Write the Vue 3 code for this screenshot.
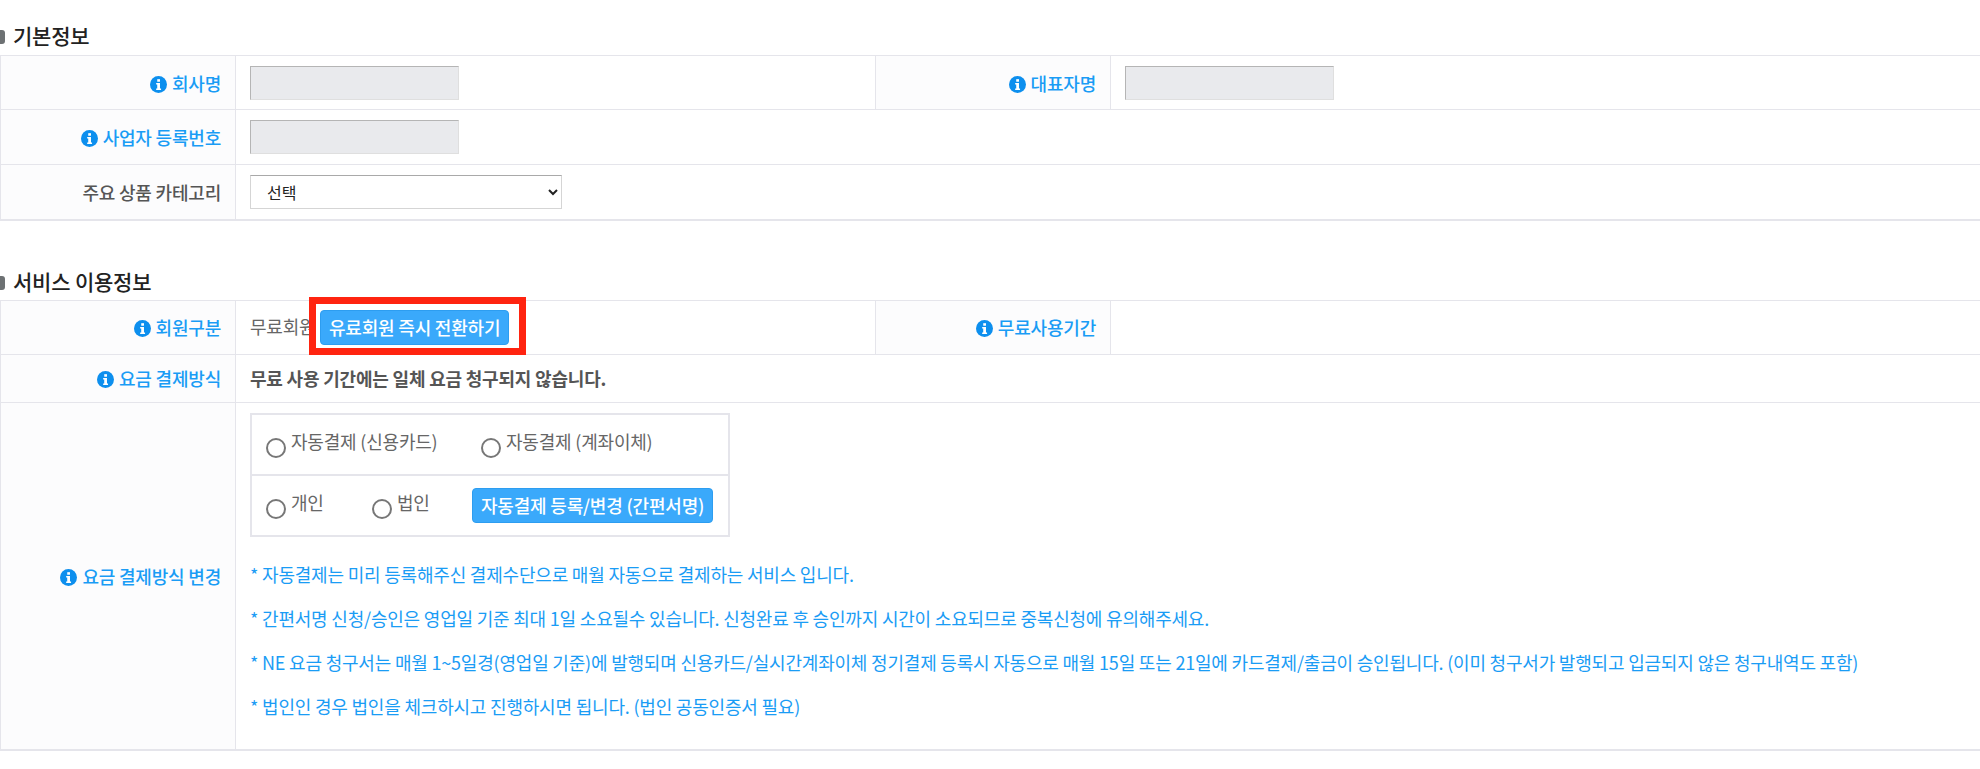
<script setup>
const notes = [
  '* 자동결제는 미리 등록해주신 결제수단으로 매월 자동으로 결제하는 서비스 입니다.',
  '* 간편서명 신청/승인은 영업일 기준 최대 1일 소요될수 있습니다. 신청완료 후 승인까지 시간이 소요되므로 중복신청에 유의해주세요.',
  '* NE 요금 청구서는 매월 1~5일경(영업일 기준)에 발행되며 신용카드/실시간계좌이체 정기결제 등록시 자동으로 매월 15일 또는 21일에 카드결제/출금이 승인됩니다. (이미 청구서가 발행되고 입금되지 않은 청구내역도 포함)',
  '* 법인인 경우 법인을 체크하시고 진행하시면 됩니다. (법인 공동인증서 필요)'
]
</script>

<template>
  <div class="page">
    <h2 class="title title-first"><span class="bullet"></span>기본정보</h2>
    <table class="grid grid-basic">
      <colgroup><col class="c1" /><col class="c2" /><col class="c3" /><col /></colgroup>
      <tbody>
        <tr class="r54">
          <th class="info"><svg class="ic" viewBox="0 0 16 16"><circle cx="8" cy="8" r="8" fill="#0d8fee"/><rect x="6.8" y="3" width="2.6" height="2.4" fill="#fff"/><path d="M5.8 6.6h3.6v5.2h1v1.4H5.8v-1.4h1V8H5.8z" fill="#fff"/></svg>회사명</th>
          <td><input class="field" disabled /></td>
          <th class="info"><svg class="ic" viewBox="0 0 16 16"><circle cx="8" cy="8" r="8" fill="#0d8fee"/><rect x="6.8" y="3" width="2.6" height="2.4" fill="#fff"/><path d="M5.8 6.6h3.6v5.2h1v1.4H5.8v-1.4h1V8H5.8z" fill="#fff"/></svg>대표자명</th>
          <td><input class="field" disabled /></td>
        </tr>
        <tr class="r55">
          <th class="info"><svg class="ic" viewBox="0 0 16 16"><circle cx="8" cy="8" r="8" fill="#0d8fee"/><rect x="6.8" y="3" width="2.6" height="2.4" fill="#fff"/><path d="M5.8 6.6h3.6v5.2h1v1.4H5.8v-1.4h1V8H5.8z" fill="#fff"/></svg>사업자 등록번호</th>
          <td colspan="3"><input class="field" disabled /></td>
        </tr>
        <tr class="r55">
          <th>주요 상품 카테고리</th>
          <td colspan="3"><select class="pick"><option>선택</option></select></td>
        </tr>
      </tbody>
    </table>

    <h2 class="title title-second"><span class="bullet"></span>서비스 이용정보</h2>
    <table class="grid">
      <colgroup><col class="c1" /><col class="c2" /><col class="c3" /><col /></colgroup>
      <tbody>
        <tr class="r54">
          <th class="info"><svg class="ic" viewBox="0 0 16 16"><circle cx="8" cy="8" r="8" fill="#0d8fee"/><rect x="6.8" y="3" width="2.6" height="2.4" fill="#fff"/><path d="M5.8 6.6h3.6v5.2h1v1.4H5.8v-1.4h1V8H5.8z" fill="#fff"/></svg>회원구분</th>
          <td>
            <div class="member"><span class="free">무료회원</span><span class="callout"><button class="btn">유료회원 즉시 전환하기</button></span></div>
          </td>
          <th class="info"><svg class="ic" viewBox="0 0 16 16"><circle cx="8" cy="8" r="8" fill="#0d8fee"/><rect x="6.8" y="3" width="2.6" height="2.4" fill="#fff"/><path d="M5.8 6.6h3.6v5.2h1v1.4H5.8v-1.4h1V8H5.8z" fill="#fff"/></svg>무료사용기간</th>
          <td></td>
        </tr>
        <tr class="r48">
          <th class="info"><svg class="ic" viewBox="0 0 16 16"><circle cx="8" cy="8" r="8" fill="#0d8fee"/><rect x="6.8" y="3" width="2.6" height="2.4" fill="#fff"/><path d="M5.8 6.6h3.6v5.2h1v1.4H5.8v-1.4h1V8H5.8z" fill="#fff"/></svg>요금 결제방식</th>
          <td colspan="3" class="strong">무료 사용 기간에는 일체 요금 청구되지 않습니다.</td>
        </tr>
        <tr>
          <th class="info"><svg class="ic" viewBox="0 0 16 16"><circle cx="8" cy="8" r="8" fill="#0d8fee"/><rect x="6.8" y="3" width="2.6" height="2.4" fill="#fff"/><path d="M5.8 6.6h3.6v5.2h1v1.4H5.8v-1.4h1V8H5.8z" fill="#fff"/></svg>요금 결제방식 변경</th>
          <td colspan="3" class="pay">
            <div class="box">
              <div class="box-row">
                <label class="radio w217"><i class="dot"></i>자동결제 (신용카드)</label>
                <label class="radio"><i class="dot"></i>자동결제 (계좌이체)</label>
              </div>
              <div class="box-row">
                <label class="radio w106"><i class="dot"></i>개인</label>
                <label class="radio w100"><i class="dot"></i>법인</label>
                <button class="btn btn-wide">자동결제 등록/변경 (간편서명)</button>
              </div>
            </div>
            <ul class="notes">
              <li v-for="n in notes" :key="n">{{ n }}</li>
            </ul>
          </td>
        </tr>
      </tbody>
    </table>
  </div>
</template>

<style>
html, body { margin: 0; background: #fff; }
</style>

<style scoped>
.page {
  width: 1980px;
  height: 769px;
  overflow: hidden;
  font-family: "Noto Sans CJK KR", "Noto Sans", sans-serif;
  color: #4a4a4a;
  font-size: 18px;
  letter-spacing: -0.2px;
}
.title {
  margin: 0;
  display: flex;
  align-items: center;
  font-size: 21px;
  font-weight: 500;
  color: #222;
  height: 24px;
}
.title-first { padding-top: 23px; padding-bottom: 8px; }
.title-second { padding-top: 48px; padding-bottom: 7px; }
.bullet {
  width: 5px;
  height: 14px;
  margin: 4px 8px 0 0;
  background: #6d7173;
  border-radius: 0 3px 3px 0;
}
.grid {
  width: 1980px;
  table-layout: fixed;
  border-collapse: collapse;
  border-top: 1px solid #e5e5eb;
  border-bottom: 2px solid #e5e5eb;
  border-left: 1px solid #e5e5eb;
}
.c1 { width: 235px; }
.c2 { width: 640px; }
.c3 { width: 235px; }
th, td {
  border: 1px solid #e5e5eb;
  border-right: 0;
  padding: 0;
}
th {
  background: #fcfcfd;
  text-align: right;
  padding-right: 14px;
  font-weight: 500;
  color: #555;
  font-size: 18px;
  white-space: nowrap;
}
td { padding-left: 14px; }
th.info { color: #1a9cf5; }
.ic { width: 17px; height: 17px; vertical-align: -2px; margin-right: 5px; }
.r55 { height: 55px; }
.r54 { height: 54px; }
.r48 { height: 48px; }
.field {
  display: block;
  box-sizing: border-box;
  width: 209px;
  height: 34px;
  background: #e9eaed;
  border: 1px solid #dfdfdf;
  border-top-color: #b5b5b5;
  border-left-color: #b5b5b5;
  padding: 0;
}
.pick {
  display: block;
  width: 312px;
  height: 34px;
  box-sizing: border-box;
  background: #fff;
  border: 1px solid #d5d5d5;
  border-top-color: #a9a9a9;
  font: 16px "Noto Sans CJK KR", sans-serif;
  color: #222;
  padding-left: 12px;
}
.member { display: flex; align-items: flex-start; white-space: nowrap; height: 53px; }
.free { width: 61px; overflow: hidden; font-size: 18px; color: #666; flex: none; line-height: 50px; }
.callout {
  border: 7px solid #ff2410;
  padding: 6px 10px 3px 4px;
  margin: -4px 0 0 -2px;
  display: block;
  position: relative;
  height: 35px;
}
.btn {
  display: block;
  height: 35px;
  border: 1px solid #2d9df0;
  border-radius: 4px;
  background: #3aa9fb;
  color: #fff;
  font: 500 18px "Noto Sans CJK KR", sans-serif;
  letter-spacing: -0.2px;
  padding: 0 8px;
  white-space: nowrap;
}
.strong { font-weight: 700; font-size: 18px; color: #555; }
.pay { padding-top: 10px; padding-bottom: 12px; }
.box {
  width: 480px;
  box-sizing: border-box;
  border: 2px solid #e5e5eb;
}
.box-row {
  height: 59px;
  display: flex;
  align-items: center;
  padding-left: 14px;
  font-size: 18px;
  color: #666;
}
.box-row + .box-row { border-top: 2px solid #e5e5eb; }
.radio { display: flex; align-items: flex-start; flex: none; line-height: 22px; }
.dot {
  box-sizing: border-box;
  width: 20px;
  height: 20px;
  border: 2px solid #777;
  border-radius: 50%;
  margin: 8px 5px 0 0;
  flex: none;
  background: #fff;
}
.w217 { width: 215px; }
.w106 { width: 106px; }
.w100 { width: 100px; }
.btn-wide { margin-left: 0; }
.notes {
  list-style: none;
  margin: 24px 0 0;
  padding: 0;
  color: #1a9cf5;
  font-size: 18px;
}
.notes li { height: 44px; line-height: 26px; white-space: nowrap; }
</style>
